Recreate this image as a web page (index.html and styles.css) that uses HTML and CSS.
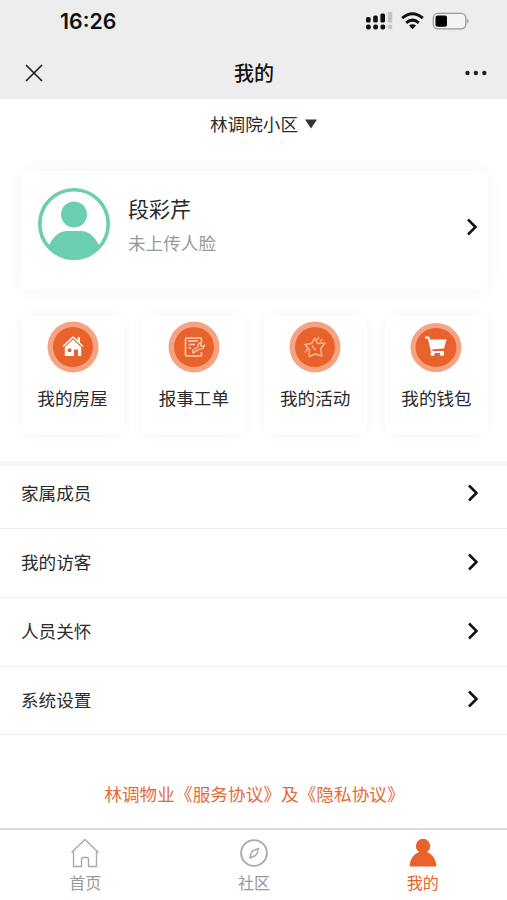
FILE: index.html
```html
<!DOCTYPE html>
<html lang="zh-CN">
<head>
<meta charset="utf-8">
<meta name="viewport" content="width=device-width, initial-scale=1">
<title>我的</title>
<link rel="stylesheet" href="styles.css">
</head>
<body>
<div class="app">
  <header class="header">
    <div class="status">
      <span class="time">16:26</span>
      <svg class="status-icons" viewBox="0 0 106 22" width="106" height="22">
        <g fill="#111"><rect x="1" y="7" width="4.6" height="5.5" rx="1.5"/><rect x="8.2" y="5.5" width="4.6" height="7" rx="1.5"/><rect x="15.4" y="3.5" width="4.6" height="9" rx="1.5"/><rect x="1" y="14.5" width="4.8" height="5" rx="2"/><rect x="8.2" y="14.5" width="4.8" height="5" rx="2"/><rect x="15.4" y="14.5" width="4.8" height="5" rx="2"/></g>
        <g fill="#c4c4c4"><rect x="22.8" y="2" width="4.4" height="10.5" rx="1.2"/><rect x="22.8" y="14.5" width="4.4" height="5" rx="2"/></g>
        <g fill="none" stroke="#111" stroke-width="3"><path d="M37.2 8.2Q47.5 -.8 57.8 8.2"/><path d="M41.2 12.9Q47.5 7.4 53.8 12.9"/></g>
        <path d="M44 15.6Q47.5 12.8 51 15.6L47.5 19.2Z" fill="#111"/>
        <rect x="68.3" y="3.3" width="32.5" height="15.5" rx="4.5" fill="#f4f4f4" stroke="#999" stroke-width="1.3"/>
        <rect x="70.5" y="5.5" width="11.5" height="11.2" rx="2" fill="#000"/>
        <path d="M102.3 8.5Q105 11 102.3 13.5Z" fill="#888"/>
      </svg>
    </div>
    <div class="nav">
      <svg width="18" height="18" viewBox="0 0 18 18"><path d="M1 1L17 17M17 1L1 17" stroke="#222" stroke-width="1.7"/></svg>
      <h1 class="title">我的</h1>
      <svg width="22" height="6" viewBox="0 0 22 6" fill="#222"><circle cx="2.5" cy="3" r="2.2"/><circle cx="10.9" cy="3" r="2.2"/><circle cx="19.3" cy="3" r="2.2"/></svg>
    </div>
  </header>
  <main class="content">
    <div class="community">林调院小区<svg width="12" height="10" viewBox="0 0 12 10"><path d="M0 .5H12L6 9.5Z" fill="#333"/></svg></div>
    <section class="profile">
      <svg class="avatar" width="76" height="76" viewBox="0 0 76 76">
        <circle cx="38" cy="38" r="34.2" fill="#fff" stroke="#6bceb0" stroke-width="3.6"/>
        <circle cx="38" cy="28.5" r="13" fill="#6bceb0"/>
        <path d="M12.5 60Q20 45 31 45H45Q56 45 63.5 60A35 35 0 0 1 12.5 60Z" fill="#6bceb0"/>
      </svg>
      <div class="who"><div class="name">段彩芹</div><div class="hint">未上传人脸</div></div>
      <svg class="chevron" width="12" height="18" viewBox="0 0 12 18"><path d="M2 1.5L9.5 9L2 16.5"/></svg>
    </section>
    <section class="shortcuts">
      <div class="card">
        <svg width="52" height="52" viewBox="0 0 52 52"><circle cx="26" cy="26" r="25.5" fill="#f6a384"/><circle cx="26" cy="26" r="20" fill="#ea622b"/><path d="M16 25.5L26 16L36 25.5" fill="none" stroke="#fff" stroke-width="1.6"/><path d="M30.5 16H33V21.5L30.5 19Z" fill="#fff"/><path d="M17.8 26.2L26 18.6L34.2 26.2V35H31V28.5H27V35H17.8Z" fill="#fff"/><rect x="20.8" y="27.5" width="3.6" height="3.6" rx="1" fill="#ea622b"/></svg>
        <span>我的房屋</span>
      </div>
      <div class="card">
        <svg width="52" height="52" viewBox="0 0 52 52"><circle cx="26" cy="26" r="25.5" fill="#f6a384"/><circle cx="26" cy="26" r="20" fill="#ea622b"/><g fill="none" stroke="#ffd2bd" stroke-width="1.5"><path d="M33.5 21V18Q33.5 17 32.5 17H18.5Q17.5 17 17.5 18V34Q17.5 35 18.5 35H32.5Q33.5 35 33.5 34V31"/><path d="M20 20H30M20.5 23.5H27M20.5 27H23"/><path d="M25 32L24.5 29.5L30 26Q29.5 22 33.5 21.5L32.5 24.5L34 25.5L36.5 24Q36 28.5 31.5 28Z" stroke-width="1.1"/></g></svg>
        <span>报事工单</span>
      </div>
      <div class="card">
        <svg width="52" height="52" viewBox="0 0 52 52"><circle cx="26" cy="26" r="25.5" fill="#f6a384"/><circle cx="26" cy="26" r="20" fill="#ea622b"/><g fill="none" stroke="#ffb793" stroke-width="1.4" stroke-linejoin="round"><path d="M26 17L28.5 22.5L36 22L31.5 28L33 35L26.5 33L20 35.5L20.5 29L16 23.5L22.5 22.5Z"/><path d="M30 16L28.5 19M33.5 18L31 20.5M16 31.5L19.5 27.5M23 24.5L26.5 29"/></g></svg>
        <span>我的活动</span>
      </div>
      <div class="card">
        <svg width="52" height="52" viewBox="0 0 52 52"><ellipse cx="26" cy="26.5" rx="25.5" ry="24.5" fill="#f6a384"/><ellipse cx="26" cy="26.5" rx="20.5" ry="19.5" fill="#ea622b"/><path d="M15 16.5H18.5L22 31H34" fill="none" stroke="#fff" stroke-width="1.8"/><path d="M19 18.5H36.5L34 27.5L21 28.5Z" fill="#fff"/><circle cx="22.5" cy="33" r="2.1" fill="#fff"/><circle cx="32" cy="33" r="2.1" fill="#fff"/></svg>
        <span>我的钱包</span>
      </div>
    </section>
    <nav class="menu">
      <div class="row">家属成员<svg class="chevron" width="12" height="18" viewBox="0 0 12 18"><path d="M2 1.5L9.5 9L2 16.5"/></svg></div>
      <div class="row">我的访客<svg class="chevron" width="12" height="18" viewBox="0 0 12 18"><path d="M2 1.5L9.5 9L2 16.5"/></svg></div>
      <div class="row">人员关怀<svg class="chevron" width="12" height="18" viewBox="0 0 12 18"><path d="M2 1.5L9.5 9L2 16.5"/></svg></div>
      <div class="row">系统设置<svg class="chevron" width="12" height="18" viewBox="0 0 12 18"><path d="M2 1.5L9.5 9L2 16.5"/></svg></div>
    </nav>
    <p class="terms">林调物业《服务协议》及《隐私协议》</p>
  </main>
  <footer class="tabs">
    <div class="tab"><svg width="30" height="30" viewBox="0 0 30 30" fill="none" stroke="#aaa" stroke-width="1.4" stroke-linejoin="round"><path d="M1.5 14.5L15 1.5L28.5 14.5"/><path d="M3.5 13V28.5H11.5V21Q11.5 19.5 13 19.5H17Q18.5 19.5 18.5 21V28.5H26.5V13"/></svg><span>首页</span></div>
    <div class="tab"><svg width="30" height="30" viewBox="0 0 30 30" fill="none" stroke="#aaa" stroke-width="1.9" stroke-linejoin="round"><circle cx="15" cy="15" r="12.9"/><path d="M19.5 10.5Q19 15 16.5 17.5L11 20Q11 16 13.5 13Z" stroke-width="1.5"/></svg><span>社区</span></div>
    <div class="tab active"><svg width="30" height="30" viewBox="0 0 30 30" fill="#ea622b"><circle cx="15" cy="8" r="7.2"/><path d="M1.5 28.5Q2 17.5 11 14H19Q28 17.5 28.5 28.5Z"/></svg><span>我的</span></div>
  </footer>
</div>
</body>
</html>
```
FILE: styles.css
```css
* { box-sizing: border-box; }
body { margin: 0; background: #fff; color: #2b2b2b; font-family: "Noto Sans CJK SC", sans-serif; font-size: 17.6px; }
svg { display: block; flex: none; }
.app { width: 507px; height: 900px; display: flex; flex-direction: column; overflow: hidden; }
.header { height: 99px; background: #ededed; }
.status { height: 44px; padding: 0 36px 0 60px; display: flex; align-items: center; justify-content: space-between; }
.time { margin-top: -2px; font: 600 21.3px/24px Inter, sans-serif; color: #111; }
.status-icons { margin-top: -2px; }
.nav { height: 57px; padding: 0 20px 0 25px; display: flex; align-items: center; justify-content: space-between; }
.title { margin: 0; font-size: 20px; line-height: 28px; font-weight: 500; color: #111; }
.content { flex: 1; display: flex; flex-direction: column; }
.community { height: 72px; padding: 12px 0 0 20px; display: flex; justify-content: center; gap: 7px; line-height: 26px; }
.community svg { margin-top: 8px; }
.profile { height: 119px; margin: 0 19px 0 21px; padding: 16px 10px 0 15px; display: flex; align-items: flex-start; border-radius: 9px; box-shadow: 0 0 18px rgba(0,0,0,.045); }
.avatar { margin-top: -1px; }
.who { flex: 1; padding: 6px 0 0 16px; }
.name { font-size: 21px; line-height: 31px; }
.hint { margin-top: 6px; line-height: 26px; color: #999; }
.chevron { fill: none; stroke: #111; stroke-width: 2.5; }
.profile .chevron { margin-top: 31px; }
.shortcuts { display: grid; grid-template-columns: repeat(4, 103px); justify-content: space-between; margin: 26px 19px 26px 21px; }
.card { height: 119px; padding-top: 5px; display: flex; flex-direction: column; align-items: center; border-radius: 9px; box-shadow: 0 0 13px rgba(0,0,0,.04); }
.card span { margin-top: 12px; line-height: 26px; }
.menu { border-top: 5px solid #f6f7f9; }
.row { height: 68.75px; padding: 0 28px 2px 21px; display: flex; align-items: center; justify-content: space-between; border-bottom: 1px solid #efefef; }
.row:first-child { height: 63px; padding-bottom: 9px; }
.terms { margin: 46px 0 0; padding-left: 2px; text-align: center; line-height: 26px; letter-spacing: .08px; color: #e46a3a; }
.tabs { height: 72px; padding-left: 1px; display: grid; grid-template-columns: repeat(3, 1fr); border-top: 2px solid #dcdcdc; }
.tab { display: flex; flex-direction: column; align-items: center; padding-top: 8px; font-size: 16px; line-height: 24px; color: #999; }
.tab span { margin-top: 2px; }
.active { color: #ea622b; }
```
